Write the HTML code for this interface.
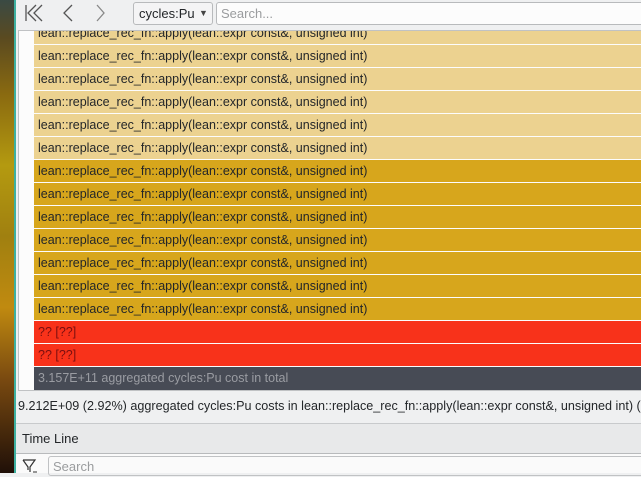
<!DOCTYPE html>
<html><head><style>
*{margin:0;padding:0;box-sizing:border-box}
body{width:641px;height:473px;overflow:hidden;position:relative;background:#eff0f1;font-family:"Liberation Sans",sans-serif;font-size:12.5px;color:#232629}
#wall{position:absolute;left:0;top:0;width:14px;height:473px;background:linear-gradient(#3a4a44 0%,#5a4a20 8%,#8a6a10 20%,#b49a10 35%,#a08010 50%,#c08a10 65%,#7a4a10 80%,#201008 100%)}
#teal{position:absolute;left:14px;top:0;width:2px;height:473px;background:#3db0a0}
#panel{position:absolute;left:18px;top:30px;width:630px;height:361px;background:#fcfcfc;border:1px solid #c0c2c4;overflow:hidden}
.row{position:absolute;left:15px;width:620px;height:22px;line-height:22px;padding-left:4px;white-space:nowrap}
.l{background:#ecd290}.d{background:#d7a61c}.r{background:#f8321a;color:#7a1010}.k{background:#474b55;color:#9a9ca2}
#tb{position:absolute;left:16px;top:0;width:625px;height:30px;background:#eff0f1}
.combo{position:absolute;left:117px;top:2px;width:80px;height:23px;border:1px solid #b8babc;border-radius:3px;background:#f4f4f5;line-height:21px;padding-left:5px;font-size:13px}
.search{position:absolute;left:200px;top:2px;width:450px;height:23px;border:1px solid #b8babc;border-radius:3px;background:#fcfcfc;line-height:21px;padding-left:4px;color:#9a9c9e;font-size:13px}
</style></head><body>
<div id="wall"></div><div id="teal"></div>
<div id="panel">
<div class="row l" style="top:-9px">lean::replace_rec_fn::apply(lean::expr const&amp;, unsigned int)</div>
<div class="row l" style="top:14px">lean::replace_rec_fn::apply(lean::expr const&amp;, unsigned int)</div>
<div class="row l" style="top:37px">lean::replace_rec_fn::apply(lean::expr const&amp;, unsigned int)</div>
<div class="row l" style="top:60px">lean::replace_rec_fn::apply(lean::expr const&amp;, unsigned int)</div>
<div class="row l" style="top:83px">lean::replace_rec_fn::apply(lean::expr const&amp;, unsigned int)</div>
<div class="row l" style="top:106px">lean::replace_rec_fn::apply(lean::expr const&amp;, unsigned int)</div>
<div class="row d" style="top:129px">lean::replace_rec_fn::apply(lean::expr const&amp;, unsigned int)</div>
<div class="row d" style="top:152px">lean::replace_rec_fn::apply(lean::expr const&amp;, unsigned int)</div>
<div class="row d" style="top:175px">lean::replace_rec_fn::apply(lean::expr const&amp;, unsigned int)</div>
<div class="row d" style="top:198px">lean::replace_rec_fn::apply(lean::expr const&amp;, unsigned int)</div>
<div class="row d" style="top:221px">lean::replace_rec_fn::apply(lean::expr const&amp;, unsigned int)</div>
<div class="row d" style="top:244px">lean::replace_rec_fn::apply(lean::expr const&amp;, unsigned int)</div>
<div class="row d" style="top:267px">lean::replace_rec_fn::apply(lean::expr const&amp;, unsigned int)</div>
<div class="row r" style="top:290px">?? [??]</div>
<div class="row r" style="top:313px">?? [??]</div>
<div class="row k" style="top:336px;height:23px">3.157E+11 aggregated cycles:Pu cost in total</div>
</div>
<div id="tb">
<svg style="position:absolute;left:8px;top:4px" width="90" height="20"><path d="M2 1V17M12 1L4 9L12 17M18 1L10 9L18 17" stroke="#555" stroke-width="1.3" fill="none"/><path d="M48 1L40 9L48 17" stroke="#555" stroke-width="1.3" fill="none"/><path d="M73 1L80 9L73 17" stroke="#888" stroke-width="1.3" fill="none"/></svg>
<div class="combo">cycles:Pu<span style="position:absolute;left:65px;top:0;font-size:9px;color:#444">▼</span></div>
<div class="search">Search...</div>
</div>
<div style="position:absolute;left:18px;top:399px;white-space:nowrap;font-size:12.6px">9.212E+09 (2.92%) aggregated cycles:Pu costs in lean::replace_rec_fn::apply(lean::expr const&amp;, unsigned int) (lib</div>
<div style="position:absolute;left:16px;top:423px;width:625px;height:1px;background:#c8cacc"></div>
<div style="position:absolute;left:16px;top:424px;width:625px;height:29px;background:#e8e9ea;line-height:29px;padding-left:6px;font-size:13px">Time Line</div>
<div style="position:absolute;left:16px;top:453px;width:625px;height:1px;background:#b8babc"></div>
<div style="position:absolute;left:16px;top:454px;width:625px;height:19px;background:#fafafa"></div>
<svg style="position:absolute;left:22px;top:458px" width="18" height="15"><path d="M1 2H13L8 9V14M1 2L6 9V12" stroke="#333" stroke-width="1.2" fill="none"/><path d="M11 14H15" stroke="#333"/></svg>
<div style="position:absolute;left:48px;top:456px;width:600px;height:20px;border:1px solid #c0c2c4;border-radius:3px;padding-left:4px;line-height:20px;color:#9a9c9e;font-size:13px">Search</div>
</body></html>
